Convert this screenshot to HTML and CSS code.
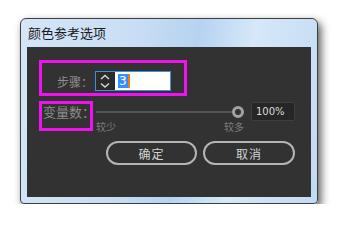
FILE: index.html
```html
<!DOCTYPE html>
<html lang="zh-CN">
<head>
  <meta charset="UTF-8" />
  <title>颜色参考选项</title>
  <link rel="stylesheet" href="styles.css">
</head>
<body>
  <div class="window">
    <div class="title">颜色参考选项</div>

    <div class="panel">
      <div class="row-step">
        <span class="label step-label">步骤：</span>
        <div class="spinner">
          <div class="arrows">
            <svg width="18" height="18" viewBox="0 0 18 18">
              <path d="M5 7 L9 3.5 L13 7" fill="none" stroke="#d8d8d8" stroke-width="1.4" />
              <path d="M5 11.5 L9 15 L13 11.5" fill="none" stroke="#d8d8d8" stroke-width="1.4" />
            </svg>
          </div>
          <div class="value"><span class="selected">3</span><span class="caret"></span></div>
        </div>
      </div>

      <div class="row-amount">
        <span class="label amount-label">变量数：</span>
        <div class="slider">
          <div class="track-row">
            <div class="track"></div>
            <div class="thumb"></div>
          </div>
          <div class="ticks">
            <span>较少</span>
            <span>较多</span>
          </div>
        </div>
        <div class="percent">100%</div>
      </div>

      <div class="buttons">
        <button class="btn">确定</button>
        <button class="btn">取消</button>
      </div>

      <div class="mark mark-step"></div>
      <div class="mark mark-amount"></div>
    </div>
  </div>
</body>
</html>
```

FILE: styles.css
```css
body {
  margin: 0;
  background-color: #ffffff;
  font-family: "Noto Sans CJK SC", "DejaVu Sans", sans-serif;
}


.window {
  margin: 18px 0 0 20px;
  width: 284px;
  height: 178px;
  padding: 0 6px 6px 6px;
  border: 1px solid #3e3e3e;
  border-radius: 6px 6px 4px 4px;
  background: linear-gradient(100deg, #d4e6f8 0%, #c9def4 35%, #b5d3f0 55%, #d6e8f9 72%, #c2daf2 100%);
  box-shadow: 3px 4px 9px rgba(0, 0, 0, 0.65);
}

.title {
  height: 28px;
  line-height: 28px;
  padding-left: 1px;
  font-size: 13px;
  color: #1a1a1a;
}


.panel {
  position: relative;
  height: 150px;
  background-color: #323232;
}

.label {
  flex-shrink: 0;
  white-space: nowrap;
  color: #8c8c8c;
  font-size: 12px;
}


.row-step {
  display: flex;
  align-items: center;
  height: 20px;
  padding: 24px 0 0 30px;
}

.step-label {
  width: 38px;
}

.spinner {
  display: flex;
  width: 74px;
  height: 18px;
  border: 1px solid #3c8fde;
}

.arrows {
  width: 19px;
  height: 18px;
  background-color: #2b2b2b;
}

.arrows svg {
  display: block;
}

.value {
  flex: 1;
  display: flex;
  align-items: center;
  padding-left: 3px;
  background-color: #ffffff;
}

.selected {
  background-color: #3391ff;
  color: #ffffff;
  font-family: "DejaVu Sans", sans-serif;
  font-size: 12px;
  line-height: 14px;
  padding: 0 1px;
}

.caret {
  width: 2px;
  height: 14px;
  background-color: #f07d00;
}


.row-amount {
  display: flex;
  margin-top: 11px;
  padding-left: 16px;
}

.amount-label {
  width: 53px;
  line-height: 19px;
  font-size: 13px;
}

.slider {
  width: 148px;
}

.track-row {
  display: flex;
  align-items: center;
  height: 19px;
}

.track {
  flex: 1;
  height: 2px;
  background-color: #545454;
}

.thumb {
  width: 6px;
  height: 6px;
  border: 3px solid #a2a2a2;
  border-radius: 50%;
  background-color: #323232;
}

.ticks {
  display: flex;
  justify-content: space-between;
  font-size: 10px;
  line-height: 12px;
  color: #7c7c7c;
}

.percent {
  width: 38px;
  height: 17px;
  margin-left: 7px;
  padding-left: 4px;
  border: 1px solid #3e3e3e;
  border-radius: 2px;
  background-color: #262626;
  color: #dcdcdc;
  font-family: "DejaVu Sans", sans-serif;
  font-size: 10px;
  line-height: 17px;
}


.buttons {
  display: flex;
  gap: 6px;
  margin-top: 8px;
  padding-left: 79px;
}

.btn {
  height: 24px;
  width: 92px;
  border: 2px solid #b4b4b4;
  border-radius: 12px;
  background-color: transparent;
  color: #d2d2d2;
  font-family: "Noto Sans CJK SC", sans-serif;
  font-size: 12px;
  letter-spacing: 1px;
}

.btn:first-child {
  width: 91px;
}


.mark {
  position: absolute;
  border: 3px solid #f012f0;
}

.mark-step {
  left: 12px;
  top: 13px;
  width: 142px;
  height: 30px;
}

.mark-amount {
  left: 12px;
  top: 54px;
  width: 48px;
  height: 24px;
}
```
